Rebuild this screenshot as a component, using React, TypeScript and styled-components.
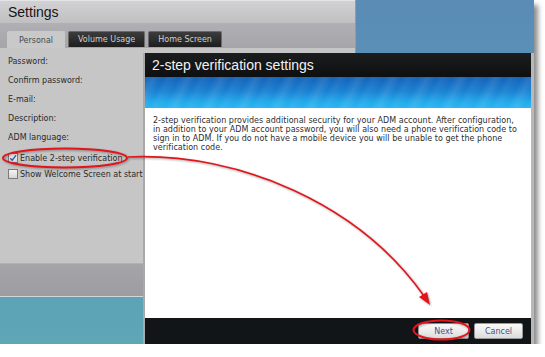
import React from "react";
import styled, { createGlobalStyle } from "styled-components";

const GlobalStyle = createGlobalStyle`
  html, body {
    margin: 0;
    padding: 0;
    background: #ffffff;
  }
  body {
    font-family: "DejaVu Sans", Verdana, sans-serif;
  }
`;

const Frame = styled.div`
  position: relative;
  width: 534px;
  height: 344px;
  overflow: hidden;
  background: linear-gradient(to bottom, #5a8cb6 0%, #5b98b6 55%, #5ea7b6 100%);
  box-shadow: 4px 5px 5px rgba(0, 0, 0, 0.45);
`;

const Window = styled.div`
  position: absolute;
  left: 0;
  top: 0;
  width: 356px;
  height: 297px;
  display: flex;
  flex-direction: column;
  background: #c6c6c6;
  border-right: 1px solid #9a9a9e;
  box-sizing: border-box;
`;

const WindowTitle = styled.div`
  height: 23px;
  display: flex;
  align-items: center;
  padding-left: 8px;
  font-family: "Liberation Sans", Arial, sans-serif;
  font-size: 14px;
  color: #151515;
  background: linear-gradient(to bottom, #d2d2d5, #c0c0c3);
  border-top: 1px solid #e4e4e6;
  box-sizing: border-box;
`;

const TabStrip = styled.div`
  height: 25px;
  display: flex;
  align-items: flex-end;
  gap: 3px;
  padding-left: 7px;
  background: linear-gradient(to bottom, #b0b0b4, #a6a6aa);
  box-sizing: border-box;
`;

const Tab = styled.div<{ $active?: boolean }>`
  height: ${(p) => (p.$active ? "16px" : "15px")};
  margin-bottom: ${(p) => (p.$active ? "0" : "1px")};
  padding: 0 ${(p) => (p.$active ? "11px" : "9px")};
  display: flex;
  align-items: center;
  font-size: 8px;
  border-radius: 2px 2px 0 0;
  color: ${(p) => (p.$active ? "#4a4a4a" : "#cfcfcf")};
  background: ${(p) =>
    p.$active ? "#c9c9c9" : "linear-gradient(to bottom, #3c3c3c, #1e1e1e)"};
  border: 1px solid ${(p) => (p.$active ? "#c9c9c9" : "#6a6a6a")};
  border-bottom: none;
`;

const Form = styled.div`
  flex: 1;
  display: flex;
  flex-direction: column;
  padding: 4px 0 0 8px;
  font-size: 8px;
  color: #2a2a2a;
`;

const FieldLabel = styled.div`
  height: 19px;
  display: flex;
  align-items: center;
`;

const CheckRow = styled.label<{ $first?: boolean }>`
  height: 16px;
  margin-top: ${(p) => (p.$first ? "3px" : "0")};
  display: flex;
  align-items: center;
  gap: 2px;
  white-space: nowrap;
`;

const Box = styled.span`
  width: 8px;
  height: 8px;
  border: 1px solid #7a7a7a;
  background: linear-gradient(to bottom, #f4f4f4, #d6d6d6);
  display: flex;
  align-items: center;
  justify-content: center;
  flex-shrink: 0;
`;

const WindowFooter = styled.div`
  height: 32px;
  background: linear-gradient(to bottom, #a4a4a9, #9c9ca2);
  border-top: 1px solid #b2b2b6;
  border-bottom: 1px solid #d0d8dc;
`;

const Dialog = styled.div`
  position: absolute;
  left: 143px;
  top: 53px;
  width: 391px;
  height: 291px;
  display: flex;
  flex-direction: column;
  border-left: 2px solid #a9a9a9;
  border-right: 3px solid #b8b8b8;
  box-sizing: border-box;
  background: #ffffff;
`;

const DialogTitle = styled.div`
  height: 24px;
  display: flex;
  align-items: center;
  padding-left: 7px;
  font-family: "Liberation Sans", Arial, sans-serif;
  font-size: 14px;
  color: #f2f2f2;
  background: linear-gradient(to bottom, #1c1d1f, #0e0f10);
`;

const Banner = styled.div`
  height: 31px;
  background:
    repeating-linear-gradient(
      115deg,
      rgba(255, 255, 255, 0) 0px,
      rgba(255, 255, 255, 0.09) 8px,
      rgba(255, 255, 255, 0) 16px,
      rgba(255, 255, 255, 0.05) 22px,
      rgba(255, 255, 255, 0) 31px
    ),
    linear-gradient(to bottom, #1462b8 0%, #1a80d2 45%, #22a9ea 80%, #27b6f0 100%);
`;

const DialogBody = styled.div`
  flex: 1;
  padding: 9px 4px 0 8px;
  font-size: 8px;
  line-height: 8.9px;
  letter-spacing: 0.03px;
  color: #2e2e2e;
  white-space: nowrap;
`;

const DialogFooter = styled.div`
  height: 26px;
  display: flex;
  align-items: center;
  justify-content: flex-end;
  gap: 5px;
  padding-right: 8px;
  background: #121518;
`;

const Button = styled.button<{ $w: number }>`
  width: ${(p) => p.$w}px;
  height: 16px;
  padding: 0;
  font-family: "DejaVu Sans", Verdana, sans-serif;
  font-size: 8px;
  color: #3a5290;
  border: 1px solid #9a9a9a;
  border-radius: 2px;
  background: linear-gradient(to bottom, #fbfbfb, #dcdcdc);
`;

const Overlay = styled.svg`
  position: absolute;
  left: 0;
  top: 0;
  pointer-events: none;
  filter: drop-shadow(1px 1px 1px rgba(0, 0, 0, 0.35));
`;

const Tick = () => (
  <svg width="8" height="8" viewBox="0 0 8 8">
    <path d="M1.2 4.2 L3.2 6.2 L7 1.4" fill="none" stroke="#2a5aa8" strokeWidth="1.4" />
  </svg>
);

const fields = ["Password:", "Confirm password:", "E-mail:", "Description:", "ADM language:"];

const message = [
  "2-step verification provides additional security for your ADM account. After configuration,",
  "in addition to your ADM account password, you will also need a phone verification code to",
  "sign in to ADM. If you do not have a mobile device you will be unable to get the phone",
  "verification code.",
];

export default function App() {
  return (
    <>
      <GlobalStyle />
      <Frame>
        <Window>
          <WindowTitle>Settings</WindowTitle>
          <TabStrip>
            <Tab $active>Personal</Tab>
            <Tab>Volume Usage</Tab>
            <Tab>Home Screen</Tab>
          </TabStrip>
          <Form>
            {fields.map((f) => (
              <FieldLabel key={f}>{f}</FieldLabel>
            ))}
            <CheckRow $first>
              <Box>
                <Tick />
              </Box>
              Enable 2-step verification
            </CheckRow>
            <CheckRow>
              <Box />
              Show Welcome Screen at start
            </CheckRow>
          </Form>
          <WindowFooter />
        </Window>

        <Dialog>
          <DialogTitle>2-step verification settings</DialogTitle>
          <Banner />
          <DialogBody>
            {message.map((line) => (
              <div key={line}>{line}</div>
            ))}
          </DialogBody>
          <DialogFooter>
            <Button $w={51}>Next</Button>
            <Button $w={49}>Cancel</Button>
          </DialogFooter>
        </Dialog>

        <Overlay width="534" height="344" viewBox="0 0 534 344">
          <ellipse cx="65" cy="158" rx="62" ry="9.5" fill="none" stroke="#e3141b" strokeWidth="2" />
          <path
            d="M128 157 C 240 152, 360 205, 424 296"
            fill="none"
            stroke="#e3141b"
            strokeWidth="1.6"
          />
          <path d="M430 305 L419 297 L427 292 Z" fill="#e3141b" />
          <ellipse cx="441.5" cy="330" rx="28" ry="9.5" fill="none" stroke="#e3141b" strokeWidth="2" />
        </Overlay>
      </Frame>
    </>
  );
}
